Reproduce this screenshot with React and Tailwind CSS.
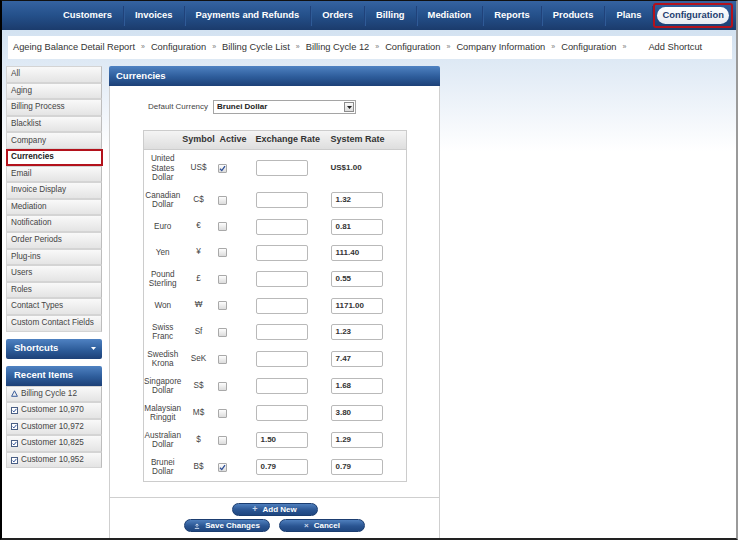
import { Fragment } from "react";

const navItems = ["Customers", "Invoices", "Payments and Refunds", "Orders", "Billing", "Mediation", "Reports", "Products", "Plans"];

const crumbs = [
    "Ageing Balance Detail Report",
    "Configuration",
    "Billing Cycle List",
    "Billing Cycle 12",
    "Configuration",
    "Company Information",
    "Configuration",
];

const sideItems = [
    "All", "Aging", "Billing Process", "Blacklist", "Company", "Currencies", "Email",
    "Invoice Display", "Mediation", "Notification", "Order Periods", "Plug-ins",
    "Users", "Roles", "Contact Types", "Custom Contact Fields",
];

const recent = [
    { icon: "tri", label: "Billing Cycle 12" },
    { icon: "box", label: "Customer 10,970" },
    { icon: "box", label: "Customer 10,972" },
    { icon: "box", label: "Customer 10,825" },
    { icon: "box", label: "Customer 10,952" },
];

const currencies = [
    { name: "United States Dollar", sym: "US$", active: true, rate: "", sys: "US$1.00", plain: true },
    { name: "Canadian Dollar", sym: "C$", active: false, rate: "", sys: "1.32" },
    { name: "Euro", sym: "€", active: false, rate: "", sys: "0.81" },
    { name: "Yen", sym: "¥", active: false, rate: "", sys: "111.40" },
    { name: "Pound Sterling", sym: "£", active: false, rate: "", sys: "0.55" },
    { name: "Won", sym: "₩", active: false, rate: "", sys: "1171.00" },
    { name: "Swiss Franc", sym: "Sf", active: false, rate: "", sys: "1.23" },
    { name: "Swedish Krona", sym: "SeK", active: false, rate: "", sys: "7.47" },
    { name: "Singapore Dollar", sym: "S$", active: false, rate: "", sys: "1.68" },
    { name: "Malaysian Ringgit", sym: "M$", active: false, rate: "", sys: "3.80" },
    { name: "Australian Dollar", sym: "$", active: false, rate: "1.50", sys: "1.29" },
    { name: "Brunei Dollar", sym: "B$", active: true, rate: "0.79", sys: "0.79" },
];

const blueHead =
    "h-[20px] flex items-center rounded-t-[2px] bg-[linear-gradient(#4f82c2,#2d5c9a_55%,#1d4077)] text-white font-bold text-[9.5px]";
const sideItem =
    "h-[16.6px] flex items-center pl-[4px] border border-[#d4d4d4] border-r-[#bdbdbd] bg-[linear-gradient(#f9f9f9,#e4e4e4)] text-[8.2px] text-[#444]";
const field =
    "w-[52px] h-[16px] rounded-[2px] border border-[#b9b9b9] bg-white pl-[4px] flex items-center text-[8px] font-bold text-[#333]";
const btn =
    "w-[86px] h-[13px] rounded-full border border-[#1b3d70] bg-[linear-gradient(#4f7fbd,#2a5592_55%,#1f467f)] text-white font-bold text-[8px] flex items-center justify-center gap-[5px]";

function Checkbox({ checked }) {
    return (
        <div className="w-[9px] h-[9px] border border-[#a9a9a9] rounded-[1px] bg-[linear-gradient(#fdfdfd,#dcdcdc)] flex items-center justify-center">
            {checked && (
                <svg width="7" height="7" viewBox="0 0 7 7">
                    <path d="M1 3.8 L2.8 5.6 L6 1.2" fill="none" stroke="#2d4f97" strokeWidth="1.3" />
                </svg>
            )}
        </div>
    );
}

export default function App() {
    return (
        <div className="w-[740px] h-[542px] bg-white overflow-hidden font-['Liberation_Sans',Arial,sans-serif]">
            <div className="w-[738px] h-[540px] flex flex-col border-l-2 border-t border-b-2 border-r-2 border-l-black border-t-[#111] border-b-[#222] border-r-[#9a9a9a] bg-[linear-gradient(#d3e2f1_30px,#e9f0f8_90px,#fff_150px)]">
                {/* Top nav */}
                <div className="h-[29px] shrink-0 flex items-center pl-[50px] bg-[linear-gradient(#3563a1,#24508a_50%,#1b3b6c)]">
                    {navItems.map((n) => (
                        <Fragment key={n}>
                            <div className="px-[11px] text-[9.4px] font-bold text-white whitespace-nowrap">{n}</div>
                            <div className="w-px h-[20px] bg-[#20427a] shadow-[1px_0_0_#2f5b97]" />
                        </Fragment>
                    ))}
                    <div className="border-2 border-[#b3121c] rounded-[3px] p-[2px]">
                        <div className="h-[17px] px-[5px] rounded-full bg-[linear-gradient(#ffffff,#e6ebf2)] flex items-center text-[9.4px] font-bold text-[#1d3d70]">
                            Configuration
                        </div>
                    </div>
                </div>

                {/* Breadcrumb */}
                <div className="mt-[6px] ml-[6px] mr-[4px] h-[23px] shrink-0 bg-white flex items-center pl-[5px] text-[9.3px] text-[#333] whitespace-nowrap">
                    {crumbs.map((c, i) => (
                        <Fragment key={i}>
                            <span>{c}</span>
                            <span className="mx-[6px] text-[7px] text-[#777]">»</span>
                        </Fragment>
                    ))}
                    <span className="ml-[16px]">Add Shortcut</span>
                </div>

                <div className="mt-[7px] flex-1 min-h-0 flex pl-[4px] gap-[7px]">
                    {/* Sidebar */}
                    <div className="w-[96px] shrink-0">
                        <div>
                            {sideItems.map((s) =>
                                s === "Currencies" ? (
                                    <div
                                        key={s}
                                        className="h-[16.6px] w-[97px] flex items-center pl-[3px] border-2 border-[#b3121c] bg-white text-[8.2px] font-bold text-[#222]"
                                    >
                                        {s}
                                    </div>
                                ) : (
                                    <div key={s} className={sideItem}>
                                        {s}
                                    </div>
                                )
                            )}
                        </div>

                        <div className={`${blueHead} mt-[7px] rounded-b-[2px] justify-between pl-[8px] pr-[6px]`}>
                            <span>Shortcuts</span>
                            <svg width="5" height="3" viewBox="0 0 5 3">
                                <path d="M0 0 H5 L2.5 3 Z" fill="#fff" />
                            </svg>
                        </div>

                        <div className={`${blueHead} mt-[7px] pl-[8px]`}>Recent Items</div>
                        <div>
                            {recent.map((r) => (
                                <div key={r.label} className={`${sideItem} gap-[3px]`}>
                                    {r.icon === "tri" ? (
                                        <svg width="7" height="7" viewBox="0 0 7 7">
                                            <path d="M3.5 0.8 L6.4 6.3 H0.6 Z" fill="none" stroke="#3a5d9c" strokeWidth="1" />
                                        </svg>
                                    ) : (
                                        <svg width="7" height="7" viewBox="0 0 7 7">
                                            <rect x="0.5" y="0.5" width="6" height="6" fill="#fff" stroke="#4a5f85" />
                                            <path d="M1.6 3.6 L2.9 4.9 L5.4 1.9" fill="none" stroke="#2d4f97" strokeWidth="1" />
                                        </svg>
                                    )}
                                    <span>{r.label}</span>
                                </div>
                            ))}
                        </div>
                    </div>

                    {/* Main panel */}
                    <div className="w-[331px] shrink-0 flex flex-col">
                        <div className={`${blueHead} pl-[7px]`}>Currencies</div>
                        <div className="flex-1 bg-white border-x border-[#cfcfcf] pt-[14px]">
                            <div className="flex items-center pl-[38px]">
                                <span className="text-[8px] text-[#444]">Default Currency</span>
                                <div className="ml-[5px] w-[143px] h-[14px] border border-[#a5a5a5] bg-white flex items-center justify-between pl-[3px] pr-[1px]">
                                    <span className="text-[8px] font-bold text-[#222]">Brunei Dollar</span>
                                    <div className="w-[10px] h-[10px] border border-[#8c8c8c] bg-[linear-gradient(#fafafa,#dcdcdc)] flex items-center justify-center">
                                        <svg width="5" height="3" viewBox="0 0 5 3">
                                            <path d="M0 0 H5 L2.5 3 Z" fill="#222" />
                                        </svg>
                                    </div>
                                </div>
                            </div>

                            <table className="mt-[16px] ml-[33px] w-[263px] table-fixed border-collapse border border-[#cccccc]">
                                <colgroup>
                                    <col className="w-[38px]" />
                                    <col className="w-[34px]" />
                                    <col className="w-[35px]" />
                                    <col className="w-[76px]" />
                                    <col className="w-[80px]" />
                                </colgroup>
                                <thead>
                                    <tr className="h-[19px] bg-[linear-gradient(#f4f4f4,#dedede)] border-b border-[#cccccc] text-[9px] font-bold text-[#333]">
                                        <th />
                                        <th className="text-center font-bold">Symbol</th>
                                        <th className="text-center font-bold">Active</th>
                                        <th className="text-left pl-[5px] font-bold whitespace-nowrap">Exchange Rate</th>
                                        <th className="text-left pl-[4px] font-bold whitespace-nowrap">System Rate</th>
                                    </tr>
                                </thead>
                                <tbody className="text-[8.2px] text-[#444]">
                                    {currencies.map((c) => (
                                        <tr key={c.name}>
                                            <td className="py-[4px] text-center leading-[9.5px]">{c.name}</td>
                                            <td className="text-center">{c.sym}</td>
                                            <td className="pl-[2px]">
                                                <Checkbox checked={c.active} />
                                            </td>
                                            <td className="pl-[5px] py-[5px]">
                                                <div className={field}>{c.rate}</div>
                                            </td>
                                            <td className="pl-[4px] py-[5px]">
                                                {c.plain ? (
                                                    <span className="text-[8px] font-bold text-[#333]">{c.sys}</span>
                                                ) : (
                                                    <div className={field}>{c.sys}</div>
                                                )}
                                            </td>
                                        </tr>
                                    ))}
                                </tbody>
                            </table>
                        </div>

                        <div className="h-[41px] shrink-0 bg-white border-x border-t border-[#cfcfcf] flex flex-col items-center pt-[5px] gap-[3px]">
                            <div className={btn}>
                                <span className="text-[#c9d6ea] text-[9px] leading-none">+</span>
                                <span>Add New</span>
                            </div>
                            <div className="flex gap-[9px]">
                                <div className={btn}>
                                    <svg width="6" height="6" viewBox="0 0 6 6">
                                        <path d="M3 4.2 V1 M1.4 2.5 L3 0.9 L4.6 2.5 M0.8 5.4 H5.2" fill="none" stroke="#c9d6ea" strokeWidth="1" />
                                    </svg>
                                    <span>Save Changes</span>
                                </div>
                                <div className={btn}>
                                    <span className="text-[#c9d6ea] text-[8px] leading-none">×</span>
                                    <span>Cancel</span>
                                </div>
                            </div>
                        </div>
                    </div>
                </div>
            </div>
        </div>
    );
}
